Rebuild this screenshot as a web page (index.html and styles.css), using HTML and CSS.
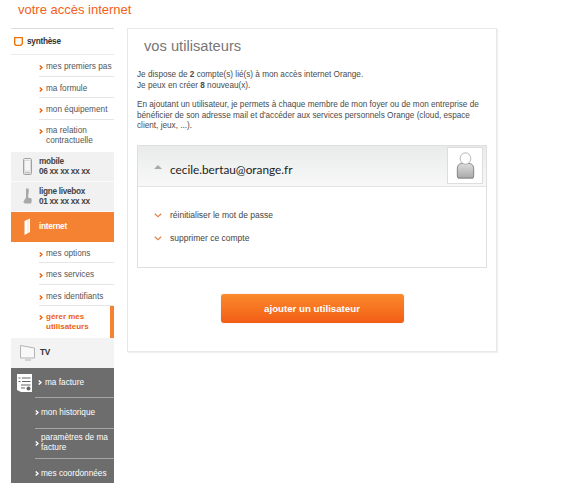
FILE: index.html
```html
<!DOCTYPE html>
<html lang="fr">
<head>
    <meta charset="UTF-8">
    <title>votre accès internet</title>
    <link rel="stylesheet" href="styles.css">
</head>
<body>
    <svg class="defs" width="0" height="0">
        <symbol id="chev" viewBox="0 0 4 5"><path d="M.7 .5 3 2.500 .7 4.500" fill="none" stroke-width="1.400"/></symbol>
        <symbol id="down" viewBox="0 0 8 5"><path d="M.8 .8 4 3.800 7.200 .8" fill="none" stroke="#e5824a" stroke-width="1.200"/></symbol>
    </svg>

    <header class="top">votre accès internet</header>

    <div class="layout">
        <nav class="side">
            <a class="synth">
                <svg class="synth-icon" width="9" height="9" viewBox="0 0 9 9"><path d="M.7 .7h7.600v6L6.800 8.300H1.800L.7 7.200z" fill="none" stroke="#f16e00" stroke-width="1.300"/></svg>
                synthèse
            </a>
            <ul class="sub">
                <li><svg class="chev"><use href="#chev"/></svg><span>mes premiers pas</span></li>
                <li><svg class="chev"><use href="#chev"/></svg><span>ma formule</span></li>
                <li><svg class="chev"><use href="#chev"/></svg><span>mon équipement</span></li>
                <li class="tall"><svg class="chev"><use href="#chev"/></svg><span>ma relation contractuelle</span></li>
            </ul>

            <a class="big">
                <svg class="big-icon" width="9" height="17" viewBox="0 0 9 17">
                    <rect x=".5" y=".5" width="8" height="16" rx="1.200" fill="#efefef" stroke="#a2a2a2"/>
                    <rect x="1.500" y="2.500" width="6" height="10.500" fill="#f6f6f6" stroke="#c4c4c4" stroke-width=".5"/>
                    <path d="M1.500 14.800h6" stroke="#b0b0b0"/>
                </svg>
                <span>mobile<br>06 xx xx xx xx</span>
            </a>
            <a class="big">
                <svg class="big-icon" width="9" height="17" viewBox="0 0 9 17">
                    <path d="M3 .5h2.500l.4 3-.8 4 .4 2.500H8l.8 2-.6 3.500H2L.3 14l1.400-2.500L3 9.500V5z" fill="#a8a8a8"/>
                </svg>
                <span>ligne livebox<br>01 xx xx xx xx</span>
            </a>
            <a class="big internet">
                <svg class="big-icon" width="9" height="17" viewBox="0 0 9 17">
                    <path d="M1.500 3 7 .5v13.500l-5.500 3z" fill="#fff"/>
                    <path d="M5 2v13" stroke="#f9c39c" stroke-width=".6"/>
                </svg>
                <span>internet</span>
            </a>
            <ul class="sub">
                <li><svg class="chev"><use href="#chev"/></svg><span>mes options</span></li>
                <li><svg class="chev"><use href="#chev"/></svg><span>mes services</span></li>
                <li><svg class="chev"><use href="#chev"/></svg><span>mes identifiants</span></li>
                <li class="tall current"><svg class="chev"><use href="#chev"/></svg><span>gérer mes utilisateurs</span></li>
            </ul>

            <a class="big tv">
                <svg class="big-icon" width="15" height="16" viewBox="0 0 15 16">
                    <path d="M.5 .5 14.500 3v10H.5zM5 15h6" fill="#f8f8f8" stroke="#b4b4b4"/>
                </svg>
                <span>TV</span>
            </a>

            <div class="bill">
                <a class="bill-head">
                    <svg class="bill-icon" width="15" height="18" viewBox="0 0 15 18">
                        <path d="M0 0h15v18H4l-4-2z" fill="#fff"/>
                        <path d="M1.500 4h2M5 4h8.500M1.500 7.500h2M5 7.500h8.500M4 11h9.500M4 14h4" stroke="#666" stroke-width="1.100"/>
                        <circle cx="11.500" cy="14.500" r="2" fill="#666"/>
                    </svg>
                    <svg class="chev"><use href="#chev"/></svg><span>ma facture</span>
                </a>
                <ul class="bill-list">
                    <li><svg class="chev"><use href="#chev"/></svg><span>mon historique</span></li>
                    <li><svg class="chev"><use href="#chev"/></svg><span>paramètres de ma facture</span></li>
                    <li><svg class="chev"><use href="#chev"/></svg><span>mes coordonnées</span></li>
                </ul>
            </div>
        </nav>

        <main class="panel">
            <h1>vos utilisateurs</h1>
            <p>Je dispose de <b>2</b> compte(s) lié(s) à mon accès internet Orange.<br>Je peux en créer <b>8</b> nouveau(x).</p>
            <p>En ajoutant un utilisateur, je permets à chaque membre de mon foyer ou de mon entreprise de bénéficier de son adresse mail et d'accéder aux services personnels Orange (cloud, espace client, jeux, ...).</p>

            <section class="account">
                <div class="account-head">
                    <span class="caret"></span>
                    <span class="email">cecile.bertau@orange.fr</span>
                    <span class="avatar">
                        <svg width="19" height="27" viewBox="0 0 22 33">
                            <defs>
                                <linearGradient id="bodyfill" x1="0" y1="0" x2="0" y2="1">
                                    <stop offset="0" stop-color="#dcdcdc"/>
                                    <stop offset="1" stop-color="#a9a9a9"/>
                                </linearGradient>
                            </defs>
                            <path d="M2 32q-1-1-1-3V20q0-5 5-6h10q5 1 5 6v9q0 2-1 3z" fill="url(#bodyfill)" stroke="#555" stroke-width=".8"/>
                            <ellipse cx="11" cy="8" rx="6.500" ry="7" fill="#fff" stroke="#a5a5a5"/>
                        </svg>
                    </span>
                </div>
                <ul class="actions">
                    <li><svg class="down"><use href="#down"/></svg>réinitialiser le mot de passe</li>
                    <li><svg class="down"><use href="#down"/></svg>supprimer ce compte</li>
                </ul>
            </section>

            <div class="add-wrap">
                <button class="add">ajouter un utilisateur</button>
            </div>
        </main>
    </div>
</body>
</html>
```

FILE: styles.css
```css
* {
    box-sizing: border-box;
}

body {
    margin: 0;
    background: #ffffff;
    font-family: "Liberation Sans", Arial, sans-serif;
    color: #444444;
    height: 485px;
    overflow: hidden;
}

.defs {
    position: absolute;
}

ul {
    list-style: none;
    margin: 0;
    padding: 0;
}

.top {
    height: 28px;
    padding: 2px 0 0 18px;
    font-size: 13px;
    line-height: 15px;
    color: #f0601a;
}

.layout {
    display: flex;
    align-items: flex-start;
    gap: 13px;
    padding-left: 11px;
}

/* left menu */
.side {
    width: 103px;
    font-size: 8.250px;
    line-height: 10px;
    flex-shrink: 0;
}

.chev {
    width: 4px;
    height: 5px;
    flex-shrink: 0;
    stroke: #ec5f12;
    margin-right: 3px;
    margin-top: 3px;
}

.synth {
    display: flex;
    align-items: center;
    height: 27px;
    border-top: 1px solid #dcdcdc;
    border-bottom: 1px solid #ebebeb;
    padding-left: 3px;
    font-size: 8.250px;
    letter-spacing: -.25px;
    font-weight: bold;
    color: #333333;
}

.synth-icon {
    margin-right: 4px;
}

.sub {
    padding-left: 28px;
}

.sub li {
    display: flex;
    align-items: flex-start;
    height: 21.500px;
    padding-top: 7px;
    border-bottom: 1px solid #e6e6e6;
    color: #555555;
    white-space: nowrap;
}

.sub li:last-child {
    border-bottom: 0;
}

.sub li.tall {
    height: 32.500px;
    padding-top: 6px;
    white-space: normal;
}

.sub li.tall span {
    width: 70px;
}

.sub li.current {
    height: 32px;
    border-right: 4px solid #f58232;
    color: #ec5f12;
    font-size: 8px;
    font-weight: bold;
}

.big {
    display: flex;
    align-items: center;
    height: 30px;
    background: #f1f1f1;
    border-bottom: 1px solid #fbfbfb;
    font-size: 8.250px;
    letter-spacing: -.3px;
    font-weight: bold;
    color: #444444;
}

.big-icon {
    margin: 0 7px 0 12px;
    flex-shrink: 0;
}

.internet {
    height: 29.500px;
    background: #f58232;
    color: #ffffff;
    border-bottom: 0;
}

.tv {
    color: #333333;
    background: #f3f3f3;
    border-bottom: 0;
}

.tv .big-icon {
    margin: 0 5px 0 9px;
}

.bill {
    background: #6d6d6d;
    color: #ffffff;
    height: 115px;
}

.bill .chev {
    stroke: #ffffff;
    margin-top: 0;
}

.bill-head {
    display: flex;
    align-items: center;
    height: 29px;
    padding-left: 6px;
}

.bill-icon {
    margin-right: 6px;
}

.bill-list {
    padding-left: 24px;
}

.bill-list li {
    display: flex;
    align-items: center;
    height: 30.500px;
    border-top: 1px solid #a5a5a5;
    padding-right: 3px;
    line-height: 10.500px;
}

.bill-list .chev {
    margin-right: 2px;
}

/* right panel */
.panel {
    width: 370px;
    height: 324px;
    border: 1px solid #e8e8e8;
    box-shadow: 1px 1px 1px #f0f0f0;
    padding: 0 9px;
    font-size: 8.200px;
    line-height: 10.500px;
    color: #4a4a4a;
}

h1 {
    margin: 8px 0 15px 7px;
    font-size: 14.700px;
    line-height: 18px;
    font-weight: normal;
    color: #777777;
}

.panel p {
    margin: 0 0 9px;
}

.account {
    margin-top: 13px;
    height: 123px;
    border: 1px solid #dfdfdf;
}

.account-head {
    display: flex;
    align-items: center;
    height: 41px;
    padding: 0 3px 0 16px;
    background: linear-gradient(#e9ebeb, #f8f8f8);
    border-bottom: 1px solid #e3e3e3;
}

.caret {
    width: 0;
    height: 0;
    margin: 2px 8px 0 0;
    border-left: 4px solid transparent;
    border-right: 4px solid transparent;
    border-bottom: 4px solid #a8a8a8;
}

.email {
    flex: 1;
    margin-top: 9px;
    font-family: Lato, sans-serif;
    font-size: 11.800px;
    color: #222222;
}

.avatar {
    display: flex;
    align-items: center;
    justify-content: center;
    width: 36px;
    height: 37px;
    background: #ffffff;
    border: 1px solid #dddddd;
}

.actions {
    padding: 17px 0 0 16px;
    font-size: 8.500px;
    color: #444444;
}

.actions li {
    display: flex;
    align-items: center;
    height: 23px;
}

.down {
    width: 8px;
    height: 5px;
    margin-right: 8px;
}

.add-wrap {
    display: flex;
    justify-content: center;
    margin-top: 26px;
}

.add {
    width: 183px;
    height: 29px;
    border: 0;
    border-radius: 3px;
    background: linear-gradient(#fb8a2b, #f35d16);
    box-shadow: 0 0 1px #b9b9b9;
    font-family: "Liberation Sans", Arial, sans-serif;
    font-size: 9.700px;
    font-weight: bold;
    color: #ffffff;
}
```
